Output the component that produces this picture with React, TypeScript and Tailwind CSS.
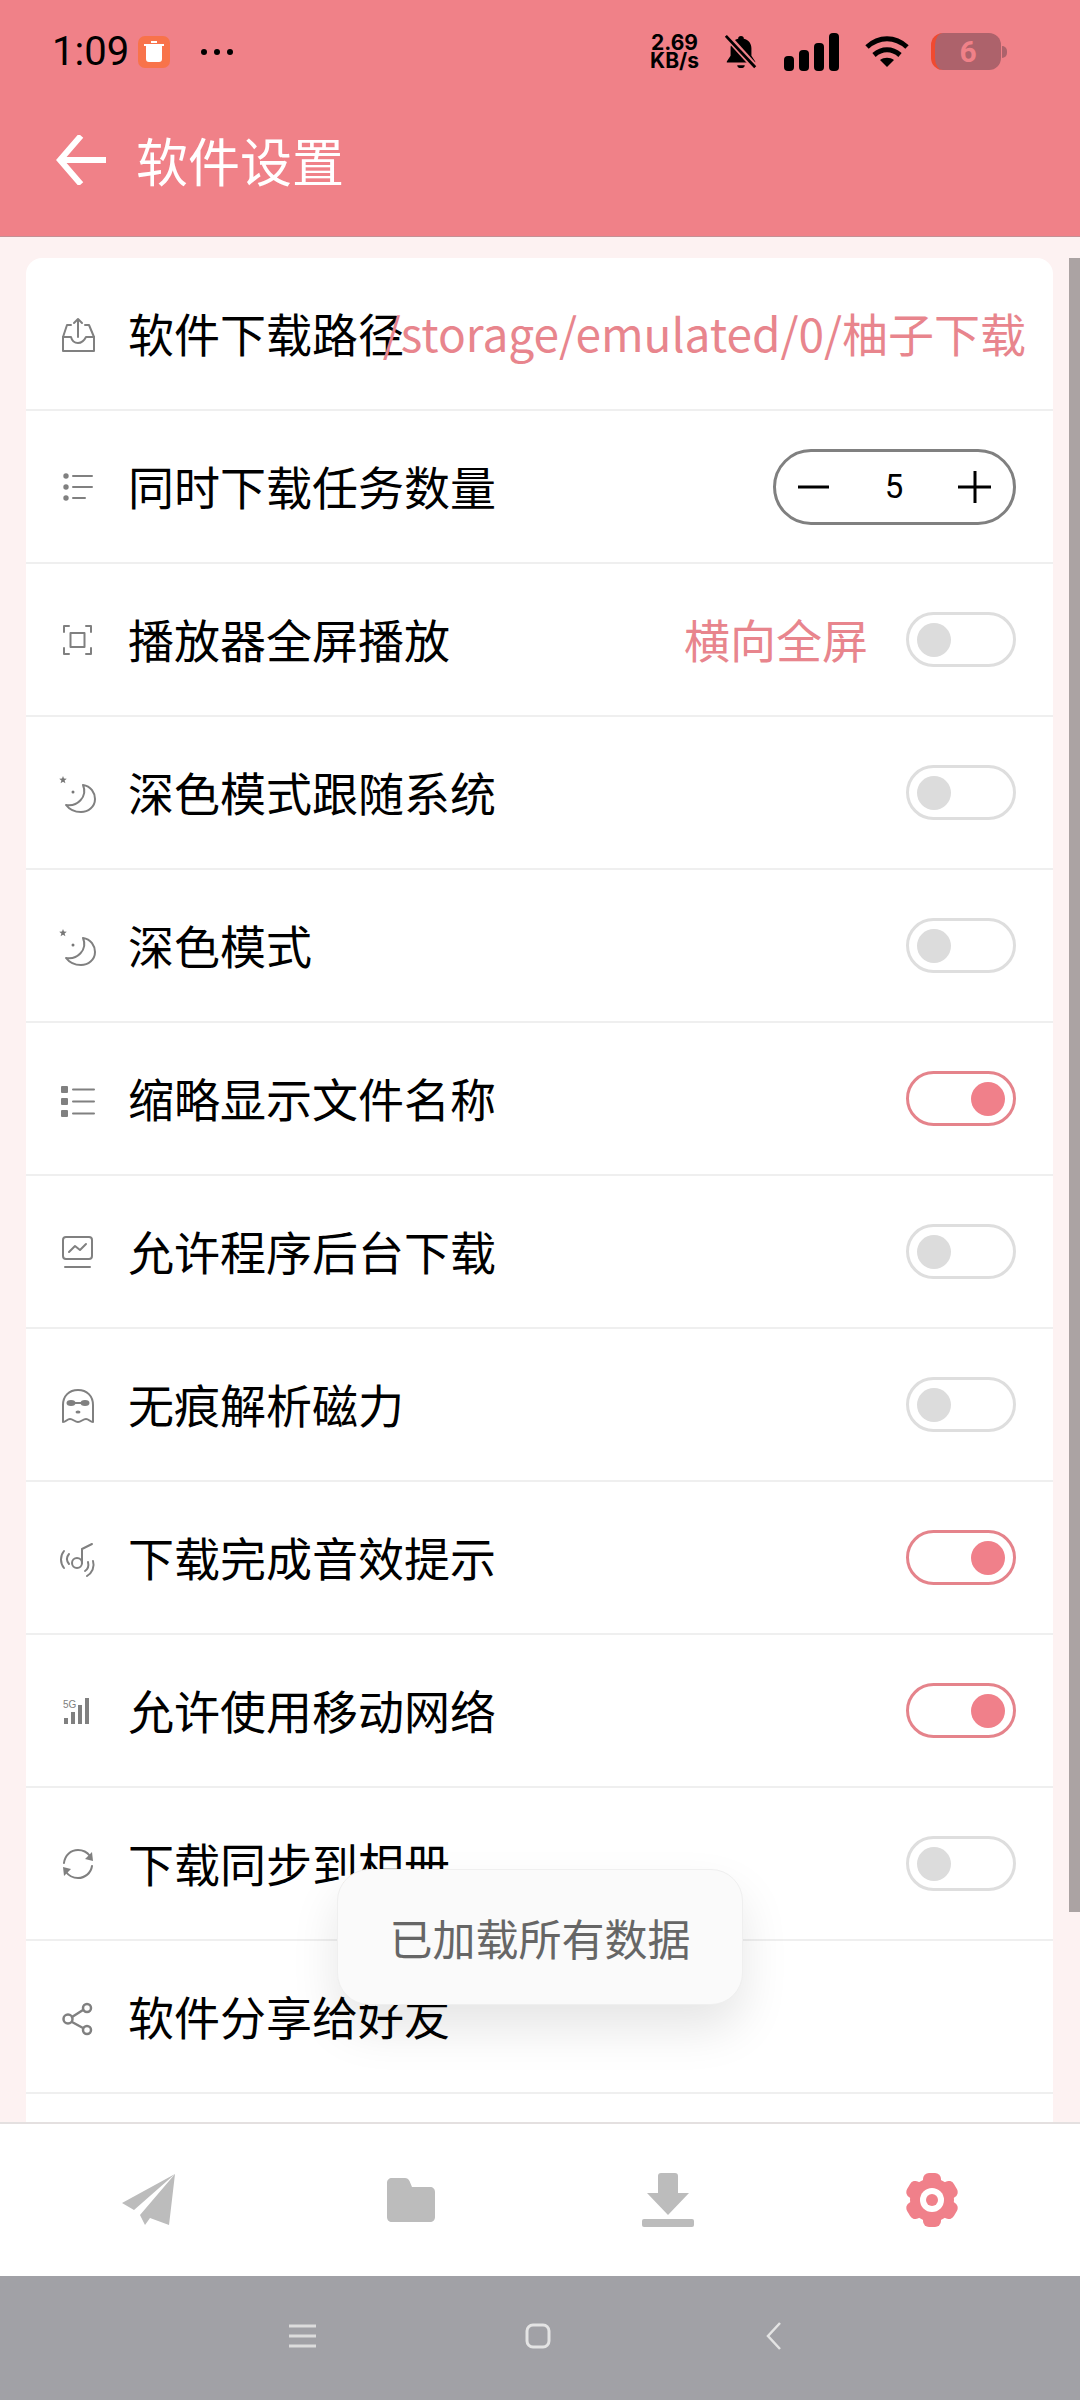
const CJK = "font-['Noto_Sans_CJK_SC','Noto_Sans',sans-serif]";

type Row = {
  label: string;
  icon: React.ReactNode;
  value?: string;
  on?: boolean;
  stepper?: boolean;
  noSwitch?: boolean;
};

const Svg = ({ children }: { children: React.ReactNode }) => (
  <svg width="36" height="36" viewBox="0 0 36 36" fill="none" stroke="#808080" strokeWidth="2" strokeLinecap="round" strokeLinejoin="round" overflow="visible">
    {children}
  </svg>
);

const Moon = () => (
  <Svg>
    <path d="M3 1l1 2.600 2.800.2-2.200 1.700.8 2.700L3 6.700.6 8.200l.8-2.700L-.8 3.800 2 3.600z" fill="#777" stroke="none" />
    <circle cx="13" cy="17" r="1.500" fill="#777" stroke="none" />
    <path d="M23 10C31 11 35 18 35 24C35 32 28 37 21 37C15 37 9 34 6 30C17 32 28 22 23 10z" />
  </Svg>
);

const rows: Row[] = [
  {
    label: "软件下载路径",
    value: "/storage/emulated/0/柚子下载",
    noSwitch: true,
    icon: (
      <Svg>
        <path d="M11 9H7L3 21v14h31V21L29 9h-4" />
        <path d="M3 21h8c1 4 3 6 7 6s6-2 8-6h8" />
        <path d="M18 21V3M14 7l4-4 4 4" />
      </Svg>
    ),
  },
  {
    label: "同时下载任务数量",
    stepper: true,
    icon: (
      <Svg>
        <circle cx="6" cy="7" r="2.700" fill="#808080" stroke="none" />
        <circle cx="6" cy="18" r="2.700" fill="#808080" stroke="none" />
        <circle cx="6" cy="29" r="2.700" fill="#808080" stroke="none" />
        <path d="M13 7h19M13 18h19M13 29h12" />
      </Svg>
    ),
  },
  {
    label: "播放器全屏播放",
    value: "横向全屏",
    icon: (
      <Svg>
        <path d="M9 4H4v6M26 4h5v6M9 32H4v-6M26 32h5v-6" />
        <rect x="10.500" y="11" width="14" height="14" />
      </Svg>
    ),
  },
  { label: "深色模式跟随系统", icon: <Moon /> },
  { label: "深色模式", icon: <Moon /> },
  {
    label: "缩略显示文件名称",
    on: true,
    icon: (
      <Svg>
        <rect x="1" y="5" width="7" height="7" rx="1" fill="#808080" stroke="none" />
        <rect x="1" y="17" width="7" height="7" rx="1" fill="#808080" stroke="none" />
        <rect x="1" y="29" width="7" height="7" rx="1" fill="#808080" stroke="none" />
        <path d="M13 8.500h21M13 20.500h21M13 32.500h21" />
      </Svg>
    ),
  },
  {
    label: "允许程序后台下载",
    icon: (
      <Svg>
        <rect x="3" y="3" width="29" height="22" rx="3" />
        <path d="M9 18l6-6 5 4 6-6M5 33h25" />
      </Svg>
    ),
  },
  {
    label: "无痕解析磁力",
    icon: (
      <Svg>
        <path d="M3 35V18C3 9 9 3 18 3s15 6 15 15v17c-3 0-4-3-7-3s-5 3-8 3-5-3-8-3-4 3-7 3z" />
        <ellipse cx="11" cy="16" rx="4.500" ry="3" fill="#808080" stroke="none" />
        <ellipse cx="25" cy="16" rx="4.500" ry="3" fill="#808080" stroke="none" />
        <path d="M14 16h8" />
        <ellipse cx="18" cy="25" rx="2.500" ry="1.500" fill="#808080" stroke="none" />
      </Svg>
    ),
  },
  {
    label: "下载完成音效提示",
    on: true,
    icon: (
      <Svg>
        <circle cx="17" cy="23" r="5" />
        <path d="M22 23V9l10-5M9 14c-2.500 3-2.500 7 0 10M4 11c-4 5-4 12 0 17M28 22c1 4 0 7-3 9M33 21c2 6-1 12-6 15" />
      </Svg>
    ),
  },
  {
    label: "允许使用移动网络",
    on: true,
    icon: (
      <Svg>
        <rect x="4" y="25" width="4" height="6" fill="#808080" stroke="none" />
        <rect x="11" y="19" width="4" height="12" fill="#808080" stroke="none" />
        <rect x="18" y="12" width="4" height="19" fill="#808080" stroke="none" />
        <rect x="25" y="5" width="4" height="26" fill="#808080" stroke="none" />
        <text x="3" y="15" fontSize="10" fill="#808080" stroke="none" fontFamily="Liberation Sans">5G</text>
      </Svg>
    ),
  },
  {
    label: "下载同步到相册",
    icon: (
      <Svg>
        <path d="M4 17C5 9 11 4 18 4c5 0 9 2 12 6M32 20c-1 7-7 12-14 12-5 0-9-2-12-6" />
        <path d="M33 15l-8-2 7-7zM3 21l8 2-7 7z" fill="#808080" stroke="none" />
      </Svg>
    ),
  },
  {
    label: "软件分享给好友",
    noSwitch: true,
    icon: (
      <Svg>
        <circle cx="8" cy="20" r="4.500" strokeWidth="2.500" />
        <circle cx="27" cy="9" r="4" strokeWidth="2.500" />
        <circle cx="27" cy="31" r="4" strokeWidth="2.500" />
        <path d="M12 18l11-7M12 23l11 6" strokeWidth="2.500" />
      </Svg>
    ),
  },
];

const Toggle = ({ on }: { on?: boolean }) =>
  on ? (
    <div className="flex h-[55px] w-[110px] items-center justify-end rounded-full border-[3px] border-[#e5838b] bg-white pr-[8px]">
      <div className="h-[34px] w-[34px] rounded-full bg-[#f0808a]" />
    </div>
  ) : (
    <div className="flex h-[55px] w-[110px] items-center rounded-full border-[3px] border-[#dedede] bg-white pl-[8px]">
      <div className="h-[34px] w-[34px] rounded-full bg-[#dcdcdc]" />
    </div>
  );

const Stepper = () => (
  <div className="flex h-[76px] w-[243px] items-center justify-between rounded-full border-[3px] border-[#808080] bg-white pr-[21px] pl-[22px]">
    <svg width="32" height="32" viewBox="0 0 32 32" stroke="#000" strokeWidth="3">
      <path d="M0 16h31" />
    </svg>
    <span className="font-['Roboto',sans-serif] text-[33px] leading-none text-black">5</span>
    <svg width="34" height="34" viewBox="0 0 34 34" stroke="#000" strokeWidth="3">
      <path d="M0 17h33M17 1v32" />
    </svg>
  </div>
);

export default function App() {
  return (
    <div className={`relative flex h-[2400px] w-[1080px] flex-col overflow-hidden bg-[#fdf2f2] ${CJK}`}>
      <header className="h-[237px] shrink-0 border-b border-[#c49095] bg-[#f08188]">
        <div className="flex h-[103px] items-center justify-between pr-[73px] pl-[52px]">
          <div className="flex items-center">
            <span className="font-['Roboto',sans-serif] text-[40px] leading-none text-black">1:09</span>
            <div className="ml-[9px] flex h-[32px] w-[32px] items-center justify-center rounded-[7px] bg-[#f8734a]">
              <svg width="20" height="22" viewBox="0 0 20 22" fill="#fff">
                <path d="M2 5h16v13a3 3 0 0 1-3 3H5a3 3 0 0 1-3-3zM0 3h20v2H0zM7 0h6v2H7z" />
              </svg>
            </div>
            <div className="ml-[31px] flex gap-[7px]">
              <div className="h-[6px] w-[6px] rounded-full bg-black" />
              <div className="h-[6px] w-[6px] rounded-full bg-black" />
              <div className="h-[6px] w-[6px] rounded-full bg-black" />
            </div>
          </div>
          <div className="flex items-center">
            <div className="flex flex-col items-center font-['Inter',sans-serif] text-[21px] leading-[18px] font-bold text-black">
              <span>2.69</span>
              <span>KB/s</span>
            </div>
            <svg className="ml-[25px]" width="34" height="36" viewBox="0 0 34 38">
              <path d="M17 2c2 0 3 1 3 3 5 1 8 5 8 10v8l4 6v1H2v-1l4-6v-8c0-5 3-9 8-10 0-2 1-3 3-3zM13 33h8c0 2-2 3-4 3s-4-1-4-3z" fill="#000" />
              <path d="M2 2l30 33" stroke="#f08188" strokeWidth="7" />
              <path d="M1 2l31 33" stroke="#000" strokeWidth="3" />
            </svg>
            <div className="ml-[26px] flex items-end gap-[5px]">
              <div className="h-[15px] w-[10px] rounded-[4px] bg-black" />
              <div className="h-[21px] w-[10px] rounded-[4px] bg-black" />
              <div className="h-[28px] w-[10px] rounded-[4px] bg-black" />
              <div className="h-[38px] w-[10px] rounded-[4px] bg-black" />
            </div>
            <svg className="ml-[25px]" width="46" height="34" viewBox="0 0 44 34" fill="none" stroke="#000" strokeWidth="5">
              <path d="M2 12c12-11 28-11 40 0M9 20c8-7 18-7 26 0" />
              <path d="M15 25c4-3 10-3 14 0l-7 7z" fill="#000" stroke="none" />
            </svg>
            <div className="ml-[21px] flex items-center">
              <div className="flex h-[37px] w-[70px] items-center justify-center overflow-hidden rounded-[12px] border-l-[4px] border-[#f04a30] bg-[#ad626b] font-['Roboto',sans-serif] text-[30px] font-bold text-[#f08188]">
                6
              </div>
              <div className="ml-[1px] h-[12px] w-[5px] rounded-r-full bg-[#ad626b]" />
            </div>
          </div>
        </div>
        <div className="flex h-[114px] items-center pl-[56px]">
          <svg width="50" height="50" viewBox="0 0 50 50" fill="none" stroke="#fff" strokeWidth="6" strokeLinecap="square">
            <path d="M23 3L4 25l19 22M6 25h42" />
          </svg>
          <span className="ml-[30px] text-[52px] leading-none text-white">软件设置</span>
        </div>
      </header>

      <main className="flex min-h-0 flex-1">
        <div className="ml-[26px] w-[1027px] overflow-hidden pt-[21px]">
          <div className="overflow-hidden rounded-t-[16px] bg-white">
            {rows.map((r) => (
              <div key={r.label} className="flex h-[153px] items-center border-b-2 border-[#efefef] pr-[37px] pl-[34px]">
                <div className="w-[36px] shrink-0">{r.icon}</div>
                <span className="ml-[32px] shrink-0 pb-[4px] text-[46px] leading-none whitespace-nowrap text-black">{r.label}</span>
                <div className="flex min-w-0 flex-1 items-center justify-end">
                  {r.value && (
                    <span className={`shrink-0 pb-[4px] text-[46px] leading-none whitespace-nowrap text-[#e8858d] ${r.noSwitch ? "-mr-[10px]" : "mr-[38px]"}`}>{r.value}</span>
                  )}
                  {r.stepper && <Stepper />}
                  {!r.stepper && !r.noSwitch && <Toggle on={r.on} />}
                </div>
              </div>
            ))}
            <div className="h-[40px]" />
          </div>
        </div>
        <div className="ml-[16px] w-[11px] pt-[21px]">
          <div className="h-[1654px] bg-[#aba3a3]" />
        </div>
      </main>

      <nav className="flex h-[154px] shrink-0 items-center border-t-2 border-[#e4e0e0] bg-white pl-[122px]">
        <svg width="54" height="52" viewBox="0 0 54 52" fill="#bcbcbc">
          <path d="M53 0L0 29l12 7zM53 0L18 41l5 10 5-7 19 7z" />
        </svg>
        <svg className="ml-[211px]" width="48" height="44" viewBox="0 0 48 44" fill="#bcbcbc">
          <path d="M5 0h13c2 0 3.500 1 4.500 3l2.500 6h18c3 0 5 2 5 5v25c0 3-2 5-5 5H5c-3 0-5-2-5-5V5c0-3 2-5 5-5z" />
        </svg>
        <svg className="ml-[207px]" width="52" height="54" viewBox="0 0 52 54" fill="#bcbcbc">
          <path d="M19 0h14a3 3 0 0 1 3 3v17h11L26 42 5 20h11V3a3 3 0 0 1 3-3z" />
          <rect x="0" y="46" width="52" height="8" rx="2" />
        </svg>
        <svg className="ml-[211px]" width="54" height="54" viewBox="0 0 54 54">
          <g fill="#f0808a">
            <circle cx="27" cy="27" r="22" />
            <rect x="18" y="0" width="18" height="54" rx="6" />
            <rect x="18" y="0" width="18" height="54" rx="6" transform="rotate(60 27 27)" />
            <rect x="18" y="0" width="18" height="54" rx="6" transform="rotate(120 27 27)" />
          </g>
          <circle cx="27" cy="27" r="12" fill="#fff" />
          <circle cx="27" cy="27" r="6" fill="#f0808a" />
        </svg>
      </nav>

      <div className="flex h-[124px] shrink-0 items-center bg-[#a1a1a6] pb-[4px]">
        <svg className="ml-[289px]" width="27" height="26" viewBox="0 0 27 26" stroke="#dcdcdc" strokeWidth="3">
          <path d="M0 3h27M0 13h27M0 23h27" />
        </svg>
        <svg className="ml-[209px]" width="26" height="26" viewBox="0 0 26 26" fill="none" stroke="#e4e4e4" strokeWidth="3">
          <rect x="2" y="2" width="22" height="22" rx="6" />
        </svg>
        <svg className="ml-[215px]" width="15" height="28" viewBox="0 0 15 28" fill="none" stroke="#e4e4e4" strokeWidth="2.500">
          <path d="M14 1L2 14l12 13" />
        </svg>
      </div>

      <div className="absolute top-[1869px] left-[337px] flex h-[136px] w-[406px] items-center justify-center rounded-[32px] border border-[#efefef] bg-[#fafafa] text-[43px] leading-none text-[#666] shadow-[0_24px_48px_rgba(0,0,0,0.1)]">
        已加载所有数据
      </div>
    </div>
  );
}
